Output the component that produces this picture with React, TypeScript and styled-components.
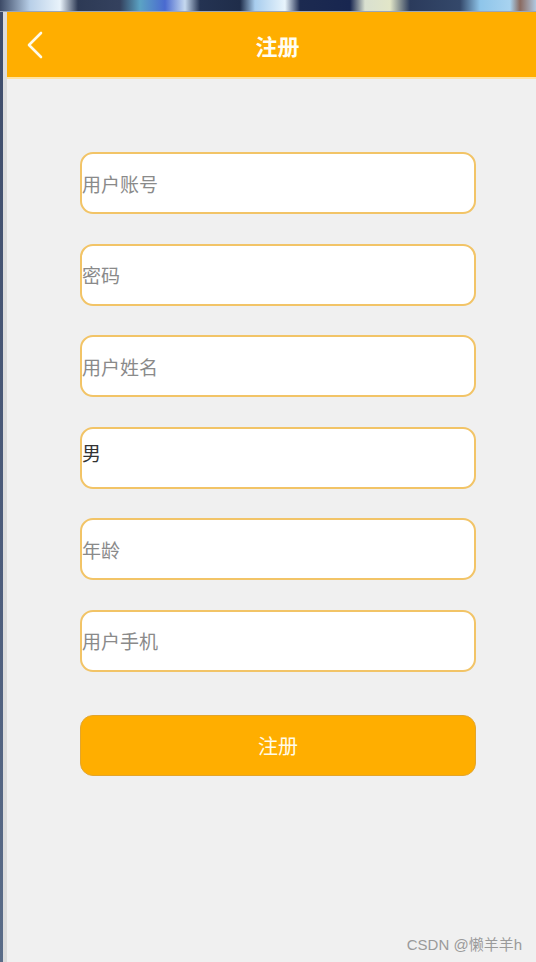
import React from "react";
import styled, { createGlobalStyle } from "styled-components";

const Global = createGlobalStyle`
  html, body { margin: 0; padding: 0; }
  body {
    background: #f0f0f0;
    font-family: "Noto Sans CJK SC", "Noto Sans", sans-serif;
    overflow: hidden;
  }
  * { box-sizing: border-box; }
`;

const Screen = styled.div`
  width: 536px;
  height: 962px;
  display: flex;
  flex-direction: column;
  position: relative;
  background: #f0f0f0;
`;

const DesktopStrip = styled.div`
  height: 12px;
  flex: none;
  background: linear-gradient(
    90deg,
    #3c4a66 0px,
    #b8cfe8 30px,
    #e9f3fb 60px,
    #2d3a55 78px,
    #34415e 120px,
    #5ba3c4 140px,
    #4a6ad0 165px,
    #c6d9ef 185px,
    #243352 200px,
    #1f2d4a 240px,
    #a8cdee 255px,
    #e8f4fc 285px,
    #1c2a50 300px,
    #182650 350px,
    #d9e0d0 365px,
    #e2e6c8 390px,
    #2b3b5c 410px,
    #34486a 460px,
    #8ec5ea 480px,
    #a8d3f0 510px,
    #8a6a60 520px,
    #b0c8e0 536px
  );
  border-bottom: 1px solid #9aa6b8;
`;

const Body = styled.div`
  flex: 1;
  display: flex;
`;

const EdgeBar = styled.div`
  width: 3px;
  flex: none;
  background: linear-gradient(180deg, #3e4c6a, #4d5d7c 60%, #5a6c88);
`;

const Frame = styled.div`
  flex: 1;
  display: flex;
  flex-direction: column;
  border-left: 4px solid #dcdcdc;
`;

const Header = styled.header`
  height: 67px;
  flex: none;
  background: #ffae00;
  border-bottom: 2px solid #ffe3a0;
  display: flex;
  align-items: center;
  position: relative;
  padding-left: 19px;
`;

const BackButton = styled.button`
  background: none;
  border: 0;
  padding: 0;
  width: 20px;
  height: 30px;
  display: flex;
  align-items: center;
  cursor: pointer;
`;

const Title = styled.h1`
  position: absolute;
  left: 0;
  right: 0;
  margin: 0;
  text-align: center;
  font-size: 22px;
  font-weight: 700;
  color: #fffdf2;
  pointer-events: none;
  padding-left: 12px;
`;

const Form = styled.form`
  display: flex;
  flex-direction: column;
  gap: 29.6px;
  padding: 73px 0 0 73px;
  width: 469px;
`;

const Field = styled.input<{ $filled?: boolean }>`
  width: 396px;
  height: 62px;
  border: 2px solid #f2c467;
  border-radius: 13px;
  background: #fff;
  padding: 0 0 ${(p) => (p.$filled ? "10px" : "0")} 0;
  font-family: "Noto Sans CJK SC", "Noto Sans", sans-serif;
  font-size: 19px;
  color: #333;
  outline: none;
  &::placeholder {
    color: #8a8a8a;
  }
`;

const Submit = styled.button`
  margin-top: 13px;
  width: 396px;
  height: 61px;
  border: 1px solid #e3a52c;
  border-radius: 13px;
  background: #ffae00;
  color: #fffbea;
  font-family: "Noto Sans CJK SC", "Noto Sans", sans-serif;
  font-size: 20px;
  font-weight: 400;
  cursor: pointer;
`;

const Watermark = styled.div`
  position: absolute;
  right: 14px;
  bottom: 8px;
  font-family: "Liberation Sans", "Noto Sans CJK SC", sans-serif;
  font-size: 15px;
  color: #9a9a9a;
`;

const fields = [
  { placeholder: "用户账号" },
  { placeholder: "密码", type: "password" },
  { placeholder: "用户姓名" },
  { placeholder: "性别", value: "男" },
  { placeholder: "年龄" },
  { placeholder: "用户手机" },
];

export default function App() {
  return (
    <>
      <Global />
      <Screen>
        <DesktopStrip />
        <Body>
          <EdgeBar />
          <Frame>
            <Header>
              <BackButton aria-label="返回">
                <svg width="18" height="28" viewBox="0 0 18 28" fill="none">
                  <path
                    d="M15 2 L3 14 L15 26"
                    stroke="#fffbe8"
                    strokeWidth="2.6"
                    strokeLinecap="round"
                    strokeLinejoin="round"
                  />
                </svg>
              </BackButton>
              <Title>注册</Title>
            </Header>
            <Form onSubmit={(e) => e.preventDefault()}>
              {fields.map((f) => (
                <Field
                  key={f.placeholder}
                  type={f.type ?? "text"}
                  placeholder={f.placeholder}
                  defaultValue={f.value}
                  $filled={!!f.value}
                />
              ))}
              <Submit type="submit">注册</Submit>
            </Form>
          </Frame>
        </Body>
        <Watermark>CSDN @懒羊羊h</Watermark>
      </Screen>
    </>
  );
}
